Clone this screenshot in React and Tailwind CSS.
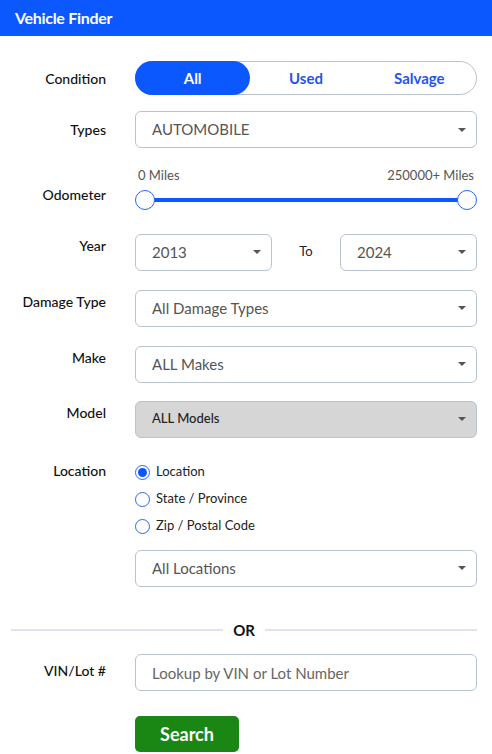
import { useState } from "react";

const Caret = () => (
  <svg width="8" height="4" viewBox="0 0 8 4" className="shrink-0">
    <path d="M0 0 L8 0 L4 4 Z" fill="#555" />
  </svg>
);

const Select = ({ value, className = "", textClass = "text-[15px] text-[#555]" }) => (
  <div
    className={`h-[37px] flex items-center justify-between pl-[16px] pr-[10px] border border-[#b9c3d0] rounded-[6px] ${className}`}
  >
    <span className={textClass}>{value}</span>
    <Caret />
  </div>
);

const Row = ({ label, labelClass = "pt-[9px]", children, className = "" }) => (
  <div className={`flex items-start ${className}`}>
    <div className={`w-[106px] text-right text-[14px] text-[#111] font-medium ${labelClass}`}>
      {label}
    </div>
    <div className="ml-[29px] w-[342px]">{children}</div>
  </div>
);

const Radio = ({ label, checked, onClick }) => (
  <div className="flex items-center h-[27px] cursor-pointer" onClick={onClick}>
    <div className="w-[15px] h-[15px] rounded-full border border-[#2a66f0] flex items-center justify-center bg-white">
      {checked && <div className="w-[9px] h-[9px] rounded-full bg-[#0b57ff]" />}
    </div>
    <span className="ml-[6px] text-[13px] text-[#222]">{label}</span>
  </div>
);

export default function App() {
  const [condition, setCondition] = useState("All");
  const [loc, setLoc] = useState("Location");

  return (
    <div className="w-[492px] h-[754px] bg-white overflow-hidden" style={{ fontFamily: "Lato, 'Open Sans', sans-serif" }}>
      {/* Header */}
      <div className="h-[36px] bg-[#0b58ff] flex items-center pl-[15px]">
        <h1 className="text-white text-[16px] font-bold tracking-[-0.3px]">Vehicle Finder</h1>
      </div>

      {/* Condition */}
      <Row label="Condition" labelClass="pt-[7px]" className="mt-[25px]">
        <div className="h-[34px] flex border border-[#b9c3d0] rounded-full">
          {["All", "Used", "Salvage"].map((c) => (
            <button
              key={c}
              onClick={() => setCondition(c)}
              className={`flex-1 rounded-full text-[15px] font-bold -m-px ${
                condition === c ? "bg-[#0b58ff] text-white" : "text-[#2356e8]"
              }`}
            >
              {c}
            </button>
          ))}
        </div>
      </Row>

      {/* Types */}
      <Row label="Types" labelClass="pt-[8px]" className="mt-[16px]">
        <Select value="AUTOMOBILE" />
      </Row>

      {/* Odometer */}
      <Row label="Odometer" labelClass="pt-[18px]" className="mt-[18px]">
        <div className="flex justify-between text-[13px] text-[#555] px-[3px]">
          <span>0 Miles</span>
          <span>250000+ Miles</span>
        </div>
        <div className="relative h-[20px] mt-[4px]">
          <div className="absolute left-[10px] right-[10px] top-[8px] h-[4px] bg-[#0b58ff]" />
          <div className="absolute left-0 top-0 w-[20px] h-[20px] rounded-full bg-white border-[1.5px] border-[#2a66f0]" />
          <div className="absolute right-0 top-0 w-[20px] h-[20px] rounded-full bg-white border-[1.5px] border-[#2a66f0]" />
        </div>
      </Row>

      {/* Year */}
      <Row label="Year" labelClass="pt-[1px]" className="mt-[24px]">
        <div className="flex items-center">
          <Select value="2013" className="w-[137px]" />
          <span className="w-[68px] text-center text-[13px] text-[#222]">To</span>
          <Select value="2024" className="w-[137px]" />
        </div>
      </Row>

      {/* Damage Type */}
      <Row label="Damage Type" labelClass="pt-[1px]" className="mt-[19px]">
        <Select value="All Damage Types" />
      </Row>

      {/* Make */}
      <Row label="Make" labelClass="pt-[1px]" className="mt-[19px]">
        <Select value="ALL Makes" />
      </Row>

      {/* Model */}
      <Row label="Model" labelClass="pt-[1px]" className="mt-[18px]">
        <Select value="ALL Models" className="bg-[#d6d6d6]" textClass="text-[13px] text-[#222] font-medium" />
      </Row>

      {/* Location */}
      <Row label="Location" labelClass="pt-0" className="mt-[22px]">
        <div className="-mt-[1px]">
          {["Location", "State / Province", "Zip / Postal Code"].map((l) => (
            <Radio key={l} label={l} checked={loc === l} onClick={() => setLoc(l)} />
          ))}
        </div>
        <Select value="All Locations" className="mt-[10px]" />
      </Row>

      {/* OR divider */}
      <div className="flex items-center mx-[11px] mt-[32px] w-[466px]">
        <div className="flex-1 h-[2px] bg-[#dfe5ec]" />
        <span className="px-[10px] text-[15px] font-bold text-[#111]">OR</span>
        <div className="flex-1 h-[2px] bg-[#dfe5ec]" />
      </div>

      {/* VIN */}
      <Row label="VIN/Lot #" labelClass="pt-[6px]" className="mt-[13px]">
        <input
          placeholder="Lookup by VIN or Lot Number"
          className="w-full h-[37px] pl-[16px] border border-[#b9c3d0] rounded-[6px] text-[15px] placeholder:text-[#666] outline-none"
        />
      </Row>

      {/* Search */}
      <div className="ml-[135px] mt-[25px]">
        <button className="w-[104px] h-[36px] bg-[#1a8714] text-white text-[18px] font-bold rounded-[5px]">
          Search
        </button>
      </div>
    </div>
  );
}
